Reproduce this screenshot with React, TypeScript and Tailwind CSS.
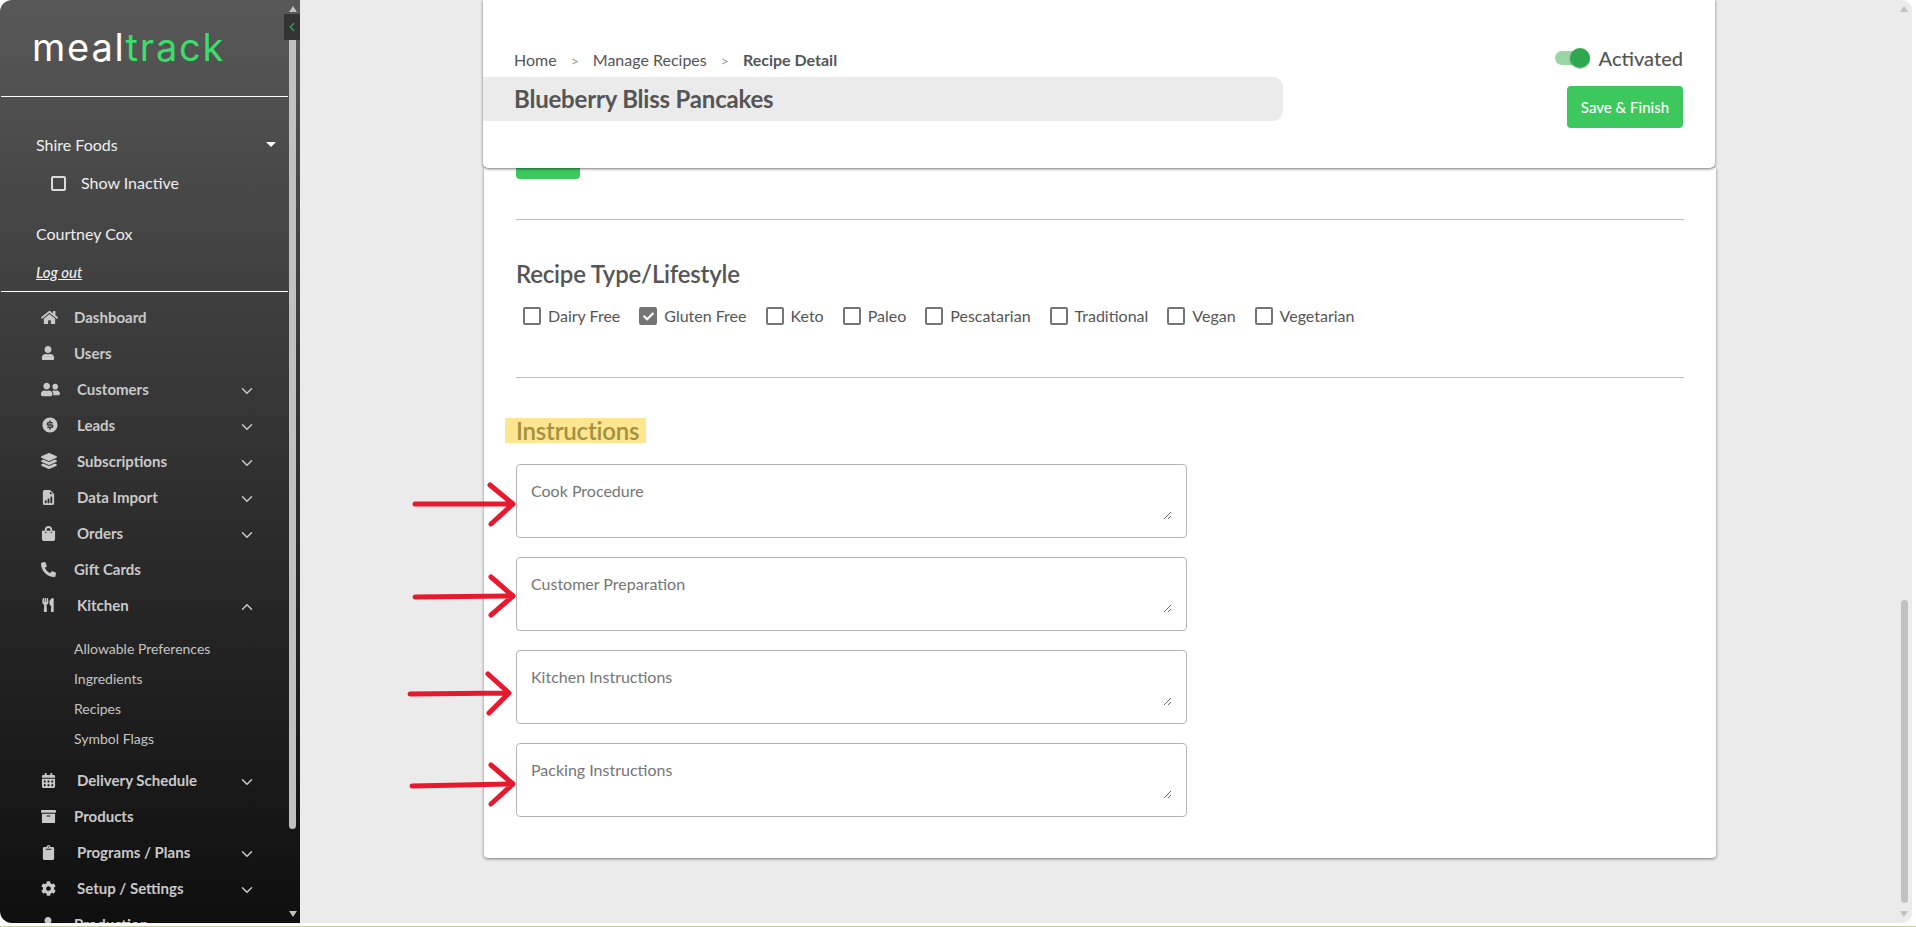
import React from "react";
import { ChevronDown, ChevronLeft, ChevronUp } from "lucide-react";
import { BsFileEarmarkBarGraphFill } from "react-icons/bs";
import {
  FaArchive,
  FaCalendarAlt,
  FaCheck,
  FaClipboard,
  FaCog,
  FaHome,
  FaLayerGroup,
  FaPhoneAlt,
  FaShoppingBag,
  FaUser,
  FaUserFriends,
  FaUtensils,
} from "react-icons/fa";
import { RiMoneyDollarCircleFill } from "react-icons/ri";

const latoFont = "font-['Lato','Open_Sans',sans-serif]";

interface NavItem {
  label: string;
  icon: React.ReactNode;
  expandable?: boolean;
  open?: boolean;
  children?: string[];
}

const navItems: NavItem[] = [
  { label: "Dashboard", icon: <FaHome size={17} /> },
  { label: "Users", icon: <FaUser size={14} /> },
  { label: "Customers", icon: <FaUserFriends size={19} />, expandable: true },
  { label: "Leads", icon: <RiMoneyDollarCircleFill size={18} />, expandable: true },
  { label: "Subscriptions", icon: <FaLayerGroup size={16} />, expandable: true },
  { label: "Data Import", icon: <BsFileEarmarkBarGraphFill size={15} />, expandable: true },
  { label: "Orders", icon: <FaShoppingBag size={15} />, expandable: true },
  { label: "Gift Cards", icon: <FaPhoneAlt size={15} /> },
  {
    label: "Kitchen",
    icon: <FaUtensils size={14} />,
    expandable: true,
    open: true,
    children: ["Allowable Preferences", "Ingredients", "Recipes", "Symbol Flags"],
  },
  { label: "Delivery Schedule", icon: <FaCalendarAlt size={15} />, expandable: true },
  { label: "Products", icon: <FaArchive size={15} /> },
  { label: "Programs / Plans", icon: <FaClipboard size={15} />, expandable: true },
  { label: "Setup / Settings", icon: <FaCog size={15} />, expandable: true },
  { label: "Production", icon: <FaUser size={14} /> },
];

const lifestyles = [
  { label: "Dairy Free", checked: false },
  { label: "Gluten Free", checked: true },
  { label: "Keto", checked: false },
  { label: "Paleo", checked: false },
  { label: "Pescatarian", checked: false },
  { label: "Traditional", checked: false },
  { label: "Vegan", checked: false },
  { label: "Vegetarian", checked: false },
];

const instructionFields = [
  { label: "Cook Procedure", arrow: "M6 42 L104 42 M81 23 L104 42 L82 62" },
  { label: "Customer Preparation", arrow: "M6 42 L104 41 M82 22 L104 41 L82 60" },
  { label: "Kitchen Instructions", arrow: "M1 46 L100 45 M79 26 L100 45 L80 65" },
  { label: "Packing Instructions", arrow: "M3 45 L104 43 M82 24 L104 43 L82 63" },
];

function Scrollbar({ thumbClass }: { thumbClass: string }) {
  return (
    <div className="flex w-[8px] shrink-0 flex-col items-center">
      <div className="mt-[6px] h-0 w-0 border-x-[4px] border-b-[6px] border-x-transparent border-b-[#c1c1c1]" />
      <div className={`w-[7px] rounded-full bg-[#c1c1c1] ${thumbClass}`} />
      <div className="mt-auto mb-[6px] h-0 w-0 border-x-[4px] border-t-[6px] border-x-transparent border-t-[#c1c1c1]" />
    </div>
  );
}

function NavRow({ item }: { item: NavItem }) {
  return (
    <>
      <div className="flex h-[36px] items-center pr-[32px] pl-[40px] text-[15px] font-bold text-[#c9c9c9]">
        <span className={`flex shrink-0 items-center ${item.expandable ? "w-[36px]" : "w-[33px]"}`}>
          {item.icon}
        </span>
        <span>{item.label}</span>
        {item.expandable && (
          <span className="mt-[4px] ml-auto">
            {item.open ? (
              <ChevronUp size={18} strokeWidth={2} />
            ) : (
              <ChevronDown size={18} strokeWidth={2} />
            )}
          </span>
        )}
      </div>
      {item.children && (
        <div className="mt-[10px] mb-[9px]">
          {item.children.map((child) => (
            <div
              key={child}
              className="flex h-[30px] items-center pl-[73px] text-[14px] text-[#c4c4c4]"
            >
              {child}
            </div>
          ))}
        </div>
      )}
    </>
  );
}

function Sidebar() {
  return (
    <aside className="flex h-full w-[300px] shrink-0 overflow-hidden rounded-l-[12px] bg-linear-to-b from-[#585858] to-[#0f0f0f] pr-[3px] pl-px">
      <div className="w-[287px] shrink-0 overflow-hidden">
        <div className="flex h-[97px] items-start border-b border-white pt-[22px] pl-[31px] font-['Inter',sans-serif] text-[38px] leading-[50px] font-normal tracking-[1.8px]">
          <span className="text-white">meal</span>
          <span className="text-[#3ddc6b]">track</span>
        </div>

        <div className="flex h-[24px] items-center pr-[12px] pl-[35px] mt-[36px] text-[16px] text-[#efefef]">
          Shire Foods
          <span className="mt-[-1px] ml-auto h-0 w-0 border-x-[5px] border-t-[5px] border-x-transparent border-t-white" />
        </div>
        <div className="mt-[14px] flex h-[24px] items-center pl-[50px] text-[16px] text-[#efefef]">
          <span className="h-[15px] w-[15px] rounded-[2px] border-2 border-[#dcdcdc]" />
          <span className="ml-[15px]">Show Inactive</span>
        </div>
        <div className="mt-[27px] flex h-[24px] items-center pl-[35px] text-[16px] text-[#efefef]">
          Courtney Cox
        </div>
        <div className="mt-[14px] flex h-[24px] items-center pl-[35px] text-[15px] font-medium text-[#efefef] italic underline">
          Log out
        </div>
        <div className="mt-[7px] border-b border-white" />

        <nav className="mt-[7px]">
          {navItems.map((item) => (
            <NavRow key={item.label} item={item} />
          ))}
        </nav>
      </div>

      <div className="relative flex flex-1 justify-center">
        <Scrollbar thumbClass="mt-[2px] h-[815px]" />
        <div className="absolute top-[14px] left-[-4px] flex h-[26px] w-[16px] items-center justify-center bg-[#333333]">
          <ChevronLeft size={14} strokeWidth={2.5} className="text-[#2ea44f]" />
        </div>
      </div>
    </aside>
  );
}

function LifestyleCheck({ label, checked }: { label: string; checked: boolean }) {
  return (
    <label className="flex items-center gap-[7px]">
      <span
        className={`flex h-[18px] w-[18px] items-center justify-center rounded-[2px] border-2 border-[#757575] ${
          checked ? "bg-[#757575]" : "bg-white"
        }`}
      >
        {checked && <FaCheck size={11} className="text-white" />}
      </span>
      {label}
    </label>
  );
}

function InstructionField({ label, arrow }: { label: string; arrow: string }) {
  return (
    <div className="relative h-[74px] w-[671px] rounded-[4px] border border-[#b5b5b5] px-[14px] pt-[14px] pb-[17px]">
      <textarea
        placeholder={label}
        className="block h-full w-full bg-white text-[16px] leading-[24px] outline-none placeholder:text-[#757575]"
      />
      <svg
        className="absolute top-[-3px] left-[-108px] overflow-visible"
        width="108"
        height="80"
        viewBox="0 0 108 80"
        fill="none"
      >
        <path
          d={arrow}
          stroke="#e6192e"
          strokeWidth="5"
          strokeLinecap="round"
          strokeLinejoin="round"
        />
      </svg>
    </div>
  );
}

function RecipeHeader() {
  return (
    <header className="relative z-10 flex h-[168px] w-[1232px] justify-between rounded-b-[5px] bg-white pr-[32px] shadow-[0_1px_3px_rgba(0,0,0,0.55)]">
      <div className="pt-[50px]">
        <div className="flex h-[20px] items-center pl-[31px] text-[16px] text-[#555555]">
          <span>Home</span>
          <span className="mx-[14px] text-[14px] text-[#9a9a9a]">&gt;</span>
          <span>Manage Recipes</span>
          <span className="mx-[14px] text-[14px] text-[#9a9a9a]">&gt;</span>
          <span className="font-bold">Recipe Detail</span>
        </div>
        <div className="mt-[7px] flex h-[44px] w-[800px] items-center rounded-r-[10px] bg-[#ebebeb] pl-[31px] text-[24px] font-bold tracking-[-0.2px] text-[#555555]">
          Blueberry Bliss Pancakes
        </div>
      </div>
      <div className="flex flex-col items-end pt-[46px]">
        <div className="flex h-[24px] items-center">
          <span className="flex h-[14px] w-[35px] items-center justify-end rounded-full bg-[#99d5a5]">
            <span className="h-[20px] w-[20px] shrink-0 rounded-full bg-[#2ea84f] shadow-[0_1px_2px_rgba(0,0,0,0.25)]" />
          </span>
          <span className="ml-[9px] text-[20px] font-medium text-[#555555]">Activated</span>
        </div>
        <button className="mt-[16px] h-[42px] w-[116px] rounded-[4px] bg-[#3dc85e] text-[15px] font-medium text-white">
          Save &amp; Finish
        </button>
      </div>
    </header>
  );
}

function RecipeBody() {
  return (
    <section className="ml-px h-[690px] w-[1232px] rounded-b-[4px] bg-white px-[32px] shadow-[0_1px_3px_rgba(0,0,0,0.5)]">
      <div className="h-[11px] w-[64px] rounded-b-[4px] bg-[#3dc85e]" />
      <div className="mt-[40px] border-b border-[#bdbdbd]" />

      <h2 className="mt-[38px] text-[24px] leading-[32px] font-semibold tracking-[-0.2px] text-[#555555]">
        Recipe Type/Lifestyle
      </h2>
      <div className="mt-[14px] flex h-[24px] items-center gap-[19px] pl-[7px] text-[16px] text-[#555555]">
        {lifestyles.map((item) => (
          <LifestyleCheck key={item.label} label={item.label} checked={item.checked} />
        ))}
      </div>
      <div className="mt-[49px] border-b border-[#bdbdbd]" />

      <h2 className="mt-[40px] ml-[-11px] flex h-[25px] w-[141px] items-center bg-[#fde68f] pl-[11px] text-[24px] font-semibold tracking-[-0.2px] text-[#a39040]">
        Instructions
      </h2>
      <div className="mt-[21px] flex flex-col gap-[19px]">
        {instructionFields.map((field) => (
          <InstructionField key={field.label} label={field.label} arrow={field.arrow} />
        ))}
      </div>
    </section>
  );
}

export default function App() {
  return (
    <div className={`h-[927px] w-[1916px] overflow-hidden bg-white ${latoFont}`}>
      <div className="flex h-[923px] pr-[4px]">
        <Sidebar />
        <main className="flex h-full flex-1 overflow-hidden rounded-r-[10px] bg-[#ebebeb]">
          <div className="flex-1 pl-[183px]">
            <RecipeHeader />
            <RecipeBody />
          </div>
          <div className="flex w-[12px] shrink-0 justify-start">
            <Scrollbar thumbClass="mt-[588px] h-[303px]" />
          </div>
        </main>
      </div>
      <div className="mt-[3px] h-px bg-[#c9cf9b]" />
    </div>
  );
}
